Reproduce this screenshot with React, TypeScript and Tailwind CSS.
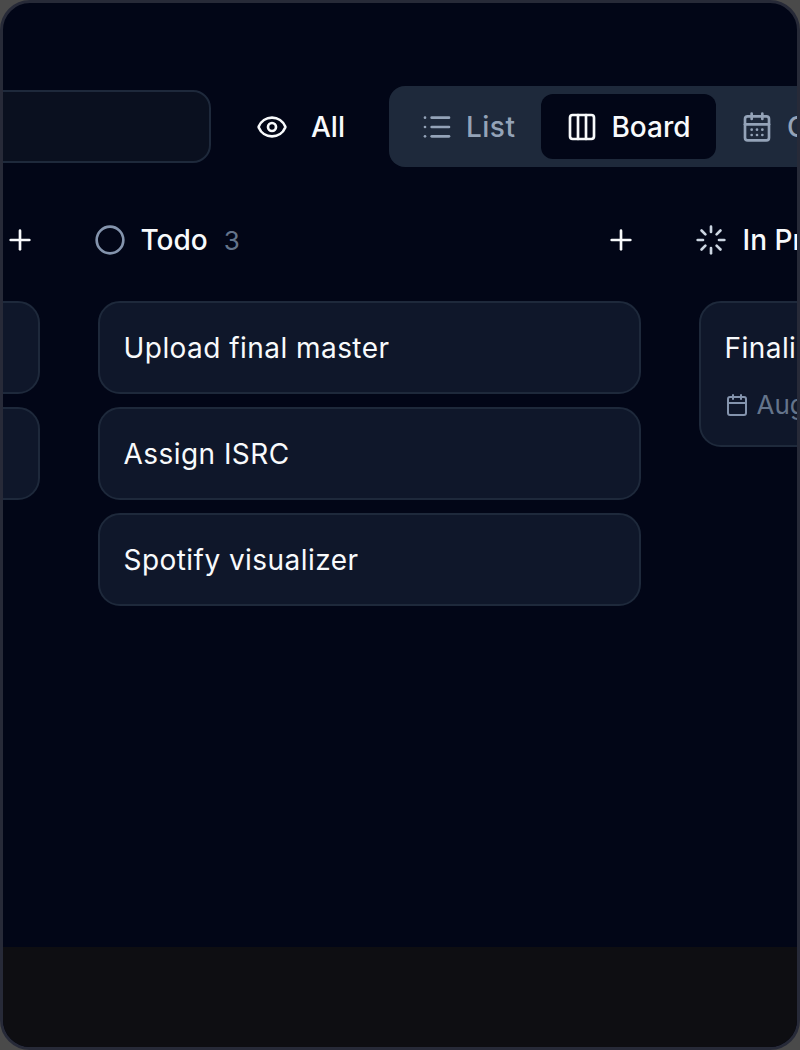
import { Calendar, CalendarDays, Circle, Columns3, Eye, List, Loader, Plus } from "lucide-react";

const font = "font-['Inter','Liberation_Sans',sans-serif]";

const prevCards = ["a", "b"];
const todoCards = ["Upload final master", "Assign ISRC", "Spotify visualizer"];

function Card({ title, date }: { title: string; date?: string }) {
  return (
    <div className={`rounded-[22px] border-2 border-[#1e293b] bg-[#0f172a] px-[24px] pt-[26px] ${date ? "pb-[22px]" : "pb-[25px]"}`}>
      <p className="h-[38px] text-[28px] leading-[38px] font-normal tracking-[0.45px] whitespace-nowrap text-[#f8fafc]">{title}</p>
      {date ? (
        <div className="mt-[20px] flex items-center gap-[8px] text-[26px] leading-[36px] text-[#64748b]">
          <Calendar size={24} strokeWidth={2} className="text-[#8494ad]" />
          <span>{date}</span>
        </div>
      ) : null}
    </div>
  );
}

export default function App() {
  return (
    <div className={`h-[1050px] w-[800px] bg-[#4a4a4a] ${font}`}>
      <div className="flex h-full w-full flex-col overflow-hidden rounded-[30px] border-[3px] border-[#272a38] bg-[#020617]">
        <main className="flex-1 overflow-hidden pt-[83px]">
          <div className="ml-[-200px] flex w-[1200px] items-center">
            <div className="h-[73px] w-[408px] rounded-[18px] border-2 border-[#1e293b] bg-[#0a101f]" />
            <div className="ml-[45px] flex items-center gap-[23px] text-[28px] font-medium text-[#f8fafc]">
              <Eye size={32} strokeWidth={2} />
              <span>All</span>
            </div>
            <div className="ml-[44px] flex h-[81px] items-center rounded-[16px] bg-[#1e293b] px-[8px] text-[28px] font-medium text-[#94a3b8]">
              <div className="flex w-[144px] items-center gap-[13px] pl-[24px]">
                <List size={32} strokeWidth={2} />
                <span className="tracking-[0.5px]">List</span>
              </div>
              <div className="flex h-[65px] w-[175px] items-center justify-center gap-[13px] rounded-[12px] bg-[#020617] text-[#f8fafc]">
                <Columns3 size={32} strokeWidth={2} />
                <span>Board</span>
              </div>
              <div className="ml-[25px] flex items-center gap-[14px]">
                <CalendarDays size={32} strokeWidth={2} />
                <span>Calendar</span>
              </div>
            </div>
          </div>
          <div className="mt-[53px] ml-[-506.5px] flex w-[2000px] gap-[58px]">
            <section className="w-[543px]">
              <div className="flex h-[40px] items-center justify-end text-[#f8fafc]">
                <Plus size={32} strokeWidth={2} className="mr-[4px]" />
              </div>
              <div className="mt-[41px] flex flex-col gap-[13px]">
                {prevCards.map((key) => (
                  <Card key={key} title="" />
                ))}
              </div>
            </section>
            <section className="w-[543px]">
              <div className="flex h-[40px] items-center text-[#f8fafc]">
                <Circle size={32} strokeWidth={2} className="-ml-[4px] text-[#8494ad]" />
                <span className="ml-[15px] text-[28px] font-medium">Todo</span>
                <span className="ml-[16px] text-[26px] text-[#64748b]">3</span>
                <Plus size={32} strokeWidth={2} className="mr-[4px] ml-auto" />
              </div>
              <div className="mt-[41px] flex flex-col gap-[13px]">
                {todoCards.map((title) => (
                  <Card key={title} title={title} />
                ))}
              </div>
            </section>
            <section className="w-[543px]">
              <div className="flex h-[40px] items-center text-[#f8fafc]">
                <Loader size={32} strokeWidth={2} className="-ml-[4px] text-[#cbd5e1]" />
                <span className="ml-[16px] text-[28px] font-medium">In Progress</span>
              </div>
              <div className="mt-[41px] flex flex-col gap-[13px]">
                <Card title="Finalize artwork" date="Aug 12" />
              </div>
            </section>
          </div>
        </main>
        <div className="h-[100px] flex-none bg-[#0e0e12]" />
      </div>
    </div>
  );
}
